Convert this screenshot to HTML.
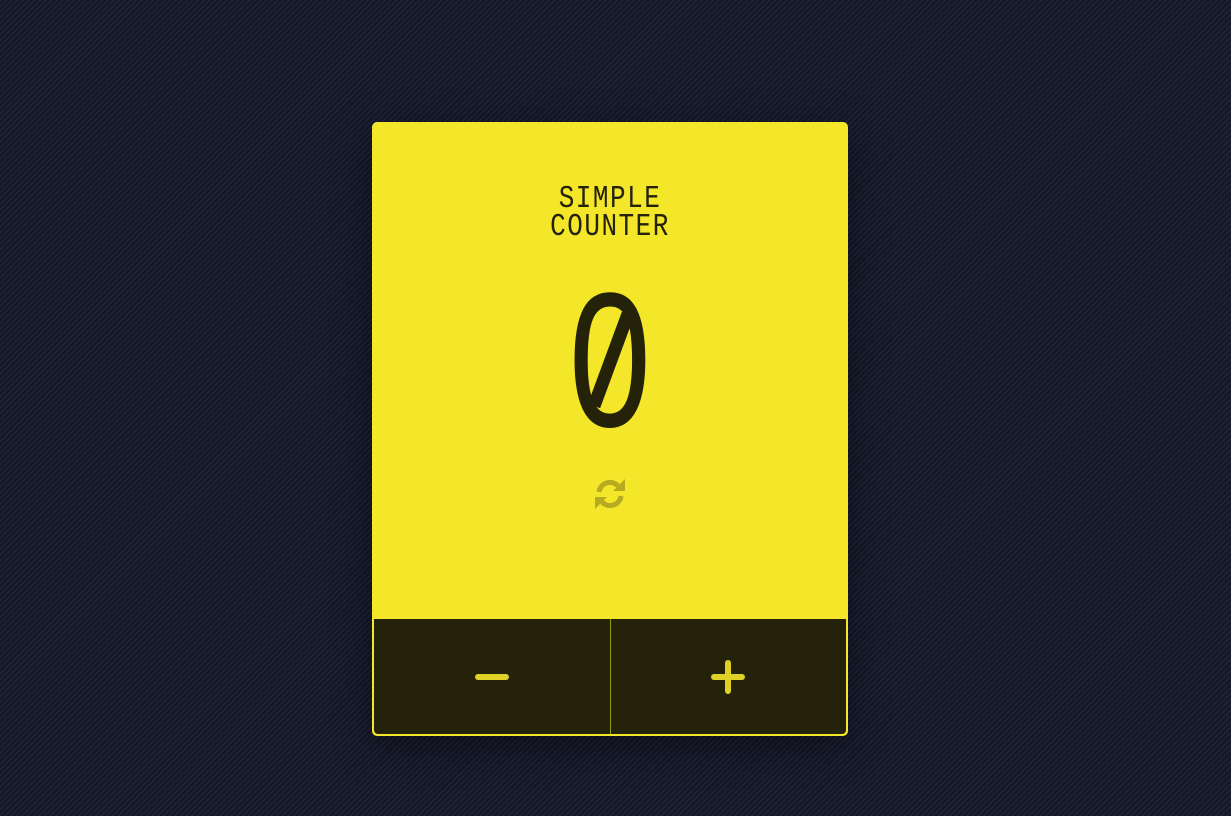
<!DOCTYPE html>
<html><head><meta charset="utf-8"><style>
html,body{margin:0;padding:0}
body{width:1231px;height:816px;overflow:hidden;background:#151827;
background-image:repeating-linear-gradient(135deg,rgba(60,70,110,.35) 0 1px,transparent 1px 4px);position:relative;font-family:"Liberation Mono",monospace}
.card{position:absolute;left:372px;top:122px;width:476px;height:614px;background:#f4e629;border-radius:5px;box-shadow:0 10px 40px rgba(0,0,0,.45);overflow:hidden}
.title{position:absolute;left:0;right:0;text-align:center;color:#25220a;font-size:26px;line-height:23px;letter-spacing:1.5px;transform:scaleY(1.22);transform-origin:top}
.num{position:absolute;left:0;right:0;text-align:center;color:#25220a;font-family:"Liberation Mono",monospace;font-size:200px;line-height:200px;transform:scaleX(.74)}
.btns{position:absolute;left:2px;top:497px;width:472px;height:115px;background:#25220a;border-radius:0 0 4px 4px}
.div{position:absolute;left:236px;top:0;width:1px;height:115px;background:#8a9a10}
</style></head><body>
<div class="card">
<div class="title" style="top:63px">SIMPLE<br>COUNTER</div>
<div class="num" style="top:152px">0</div>
<svg style="position:absolute;left:201px;top:168px" width="74" height="140" viewBox="0 0 74 140">
<ellipse cx="37" cy="72" rx="16" ry="32" fill="#f4e629"/>
<line x1="21" y1="116" x2="55" y2="24" stroke="#25220a" stroke-width="13"/>
</svg>
<svg style="position:absolute;left:221px;top:355px" width="34" height="34" viewBox="0 0 34 34">
<g fill="none" stroke="#b5aa20" stroke-width="5" stroke-linecap="butt">
<path d="M6 15 A11 11 0 0 1 25 9"/>
<path d="M28 19 A11 11 0 0 1 9 25"/>
</g>
<path d="M20 14 L32 14 L32 2 Z" fill="#b5aa20"/>
<path d="M14 20 L2 20 L2 32 Z" fill="#b5aa20"/>
</svg>
<div class="btns"><div class="div"></div>
<div style="position:absolute;left:101px;top:55px;width:34px;height:6px;border-radius:3px;background:#e0d127"></div>
<div style="position:absolute;left:337px;top:55px;width:34px;height:6px;border-radius:3px;background:#e0d127"></div>
<div style="position:absolute;left:351px;top:41px;width:6px;height:34px;border-radius:3px;background:#e0d127"></div>
</div>
</div>
</body></html>
